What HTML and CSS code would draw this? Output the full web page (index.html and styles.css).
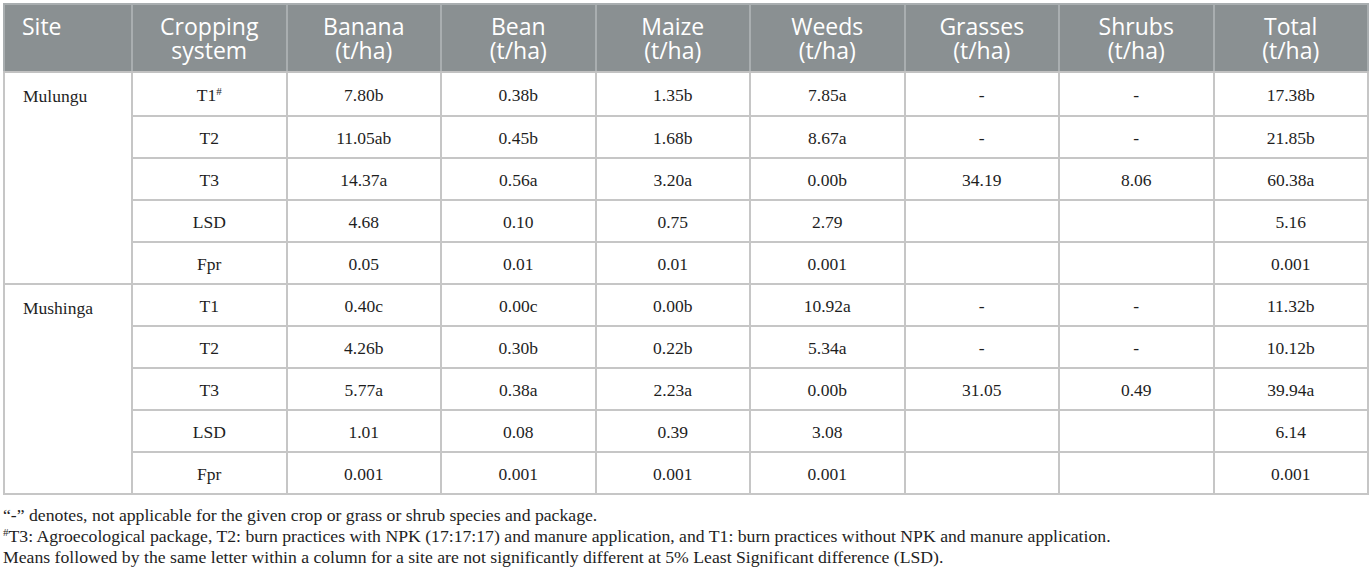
FILE: index.html
```html
<!DOCTYPE html>
<html lang="en">
<head>
  <meta charset="UTF-8" />
  <title>Biomass yield table</title>
  <link rel="stylesheet" href="styles.css">
</head>
<body>
  <div class="wrap">
    <table class="data">
      <colgroup>
        <col class="col-site">
        <col span="8">
      </colgroup>
      <thead>
        <tr>
          <th class="left">Site</th>
          <th>Cropping<br>system</th>
          <th>Banana<br>(t/ha)</th>
          <th>Bean<br>(t/ha)</th>
          <th>Maize<br>(t/ha)</th>
          <th>Weeds<br>(t/ha)</th>
          <th>Grasses<br>(t/ha)</th>
          <th>Shrubs<br>(t/ha)</th>
          <th>Total<br>(t/ha)</th>
        </tr>
      </thead>
      <tbody>
        <tr class="first">
          <td class="site" rowspan="5">Mulungu</td>
          <td>T1<sup>#</sup></td><td>7.80b</td><td>0.38b</td><td>1.35b</td><td>7.85a</td><td>-</td><td>-</td><td>17.38b</td>
        </tr>
        <tr><td>T2</td><td>11.05ab</td><td>0.45b</td><td>1.68b</td><td>8.67a</td><td>-</td><td>-</td><td>21.85b</td></tr>
        <tr><td>T3</td><td>14.37a</td><td>0.56a</td><td>3.20a</td><td>0.00b</td><td>34.19</td><td>8.06</td><td>60.38a</td></tr>
        <tr><td>LSD</td><td>4.68</td><td>0.10</td><td>0.75</td><td>2.79</td><td></td><td></td><td>5.16</td></tr>
        <tr><td>Fpr</td><td>0.05</td><td>0.01</td><td>0.01</td><td>0.001</td><td></td><td></td><td>0.001</td></tr>

        <tr>
          <td class="site" rowspan="5">Mushinga</td>
          <td>T1</td><td>0.40c</td><td>0.00c</td><td>0.00b</td><td>10.92a</td><td>-</td><td>-</td><td>11.32b</td>
        </tr>
        <tr><td>T2</td><td>4.26b</td><td>0.30b</td><td>0.22b</td><td>5.34a</td><td>-</td><td>-</td><td>10.12b</td></tr>
        <tr><td>T3</td><td>5.77a</td><td>0.38a</td><td>2.23a</td><td>0.00b</td><td>31.05</td><td>0.49</td><td>39.94a</td></tr>
        <tr><td>LSD</td><td>1.01</td><td>0.08</td><td>0.39</td><td>3.08</td><td></td><td></td><td>6.14</td></tr>
        <tr><td>Fpr</td><td>0.001</td><td>0.001</td><td>0.001</td><td>0.001</td><td></td><td></td><td>0.001</td></tr>
      </tbody>
    </table>

    <div class="notes">
      <p>“-” denotes, not applicable for the given crop or grass or shrub species and package.</p>
      <p><sup>#</sup>T3: Agroecological package, T2: burn practices with NPK (17:17:17) and manure application, and T1: burn practices without NPK and manure application.</p>
      <p>Means followed by the same letter within a column for a site are not significantly different at 5% Least Significant difference (LSD).</p>
    </div>
  </div>
</body>
</html>
```

FILE: styles.css
```css
body { margin: 0; background: #fff; }
.wrap { padding: 3px 3px 0 3px; }

.data { width: 1366px; table-layout: fixed; border-collapse: collapse; font-family: "Liberation Serif", serif; font-size: 17.5px; color: #1e1e1e; }
.data .col-site { width: 128px; }

.data th { background: #8a9092; color: #fff; font-family: "Open Sans", sans-serif; font-weight: normal; font-size: 23px; line-height: 24px; height: 68px; padding: 9px 8px 0 8px; text-align: center; vertical-align: top; box-sizing: border-box; border: 2px solid #a9aeb0; border-bottom: 2px solid #c2c2c2; }
.data th.left { text-align: left; padding-left: 17px; }

.data td { height: 42px; padding: 0 8px; padding-top: 2px; text-align: center; border: 2px solid #c6c6c6; box-sizing: border-box; }
.data tr.first td { height: 44px; }
.data td.site { text-align: left; vertical-align: top; padding: 13px 0 0 18px; }

.data sup, .notes sup { font-size: 11px; vertical-align: 6px; line-height: 0; }

.notes { margin-top: 10px; font-family: "Liberation Serif", serif; font-size: 17.7px; color: #1e1e1e; }
.notes p { margin: 0; line-height: 21px; }
```
